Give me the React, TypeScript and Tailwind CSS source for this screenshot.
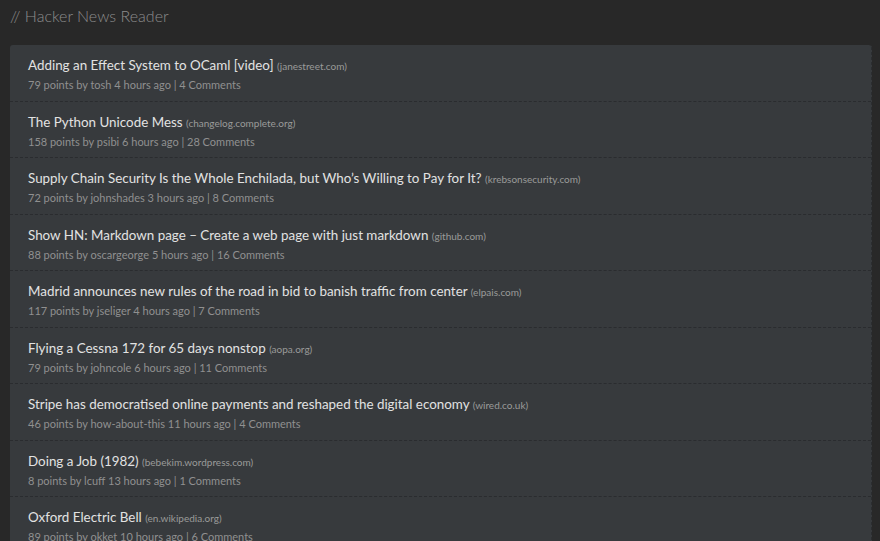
import React from "react";

const items = [
  { t: "Adding an Effect System to OCaml [video]", d: "janestreet.com", p: 79, u: "tosh", h: 4, c: 4 },
  { t: "The Python Unicode Mess", d: "changelog.complete.org", p: 158, u: "psibi", h: 6, c: 28 },
  { t: "Supply Chain Security Is the Whole Enchilada, but Who\u2019s Willing to Pay for It?", d: "krebsonsecurity.com", p: 72, u: "johnshades", h: 3, c: 8 },
  { t: "Show HN: Markdown page \u2013 Create a web page with just markdown", d: "github.com", p: 88, u: "oscargeorge", h: 5, c: 16 },
  { t: "Madrid announces new rules of the road in bid to banish traffic from center", d: "elpais.com", p: 117, u: "jseliger", h: 4, c: 7 },
  { t: "Flying a Cessna 172 for 65 days nonstop", d: "aopa.org", p: 79, u: "johncole", h: 6, c: 11 },
  { t: "Stripe has democratised online payments and reshaped the digital economy", d: "wired.co.uk", p: 46, u: "how-about-this", h: 11, c: 4 },
  { t: "Doing a Job (1982)", d: "bebekim.wordpress.com", p: 8, u: "lcuff", h: 13, c: 1 },
  { t: "Oxford Electric Bell", d: "en.wikipedia.org", p: 89, u: "okket", h: 10, c: 6 },
];

export default function App() {
  return (
    <div
      className="min-h-[541px] h-[541px] overflow-hidden bg-[#282828]"
      style={{ fontFamily: "Lato, 'Open Sans', sans-serif" }}
    >
      <div className="pl-[10px] pt-[5px] h-[45px]">
        <h1 className="text-[16px] leading-[22px] font-light text-[#8c8c8c]">// Hacker News Reader</h1>
      </div>
      <div className="mx-[10px] mr-[8px] bg-[#373a3d] rounded-t-[3px] border-r border-dashed border-[#2b2d30]">
        {items.map((it, i) => (
          <div
            key={i}
            className="h-[56.5px] pl-[18px] pt-[10px] border-b border-dashed border-[#2a2c2f]"
          >
            <div className="text-[13.4px] leading-[20px] text-[#e2e2e2]">
              {it.t} <span className="text-[10px] text-[#9a9a9a]">({it.d})</span>
            </div>
            <div className="text-[11px] leading-[17px] text-[#909090]">
              {it.p} points by {it.u} {it.h} hours ago | {it.c} Comments
            </div>
          </div>
        ))}
      </div>
    </div>
  );
}
